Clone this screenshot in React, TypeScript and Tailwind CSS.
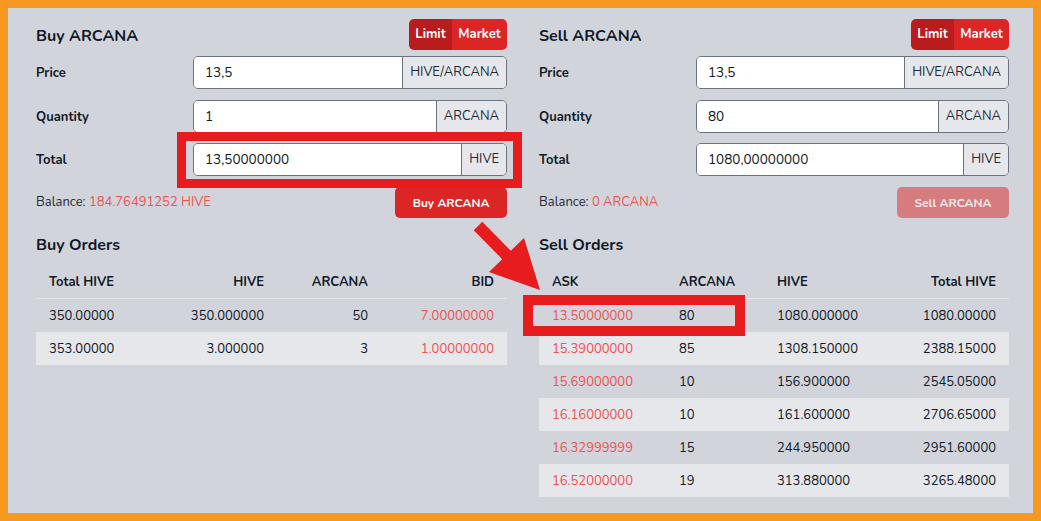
import React from "react";

const FONT = { fontFamily: '"Nunito", "Lato", "Open Sans", sans-serif' };

function Toggle() {
  return (
    <div className="flex h-[31px] rounded-[5px] overflow-hidden text-[13px] font-bold text-white">
      <div className="w-[43px] bg-[#b91c1c] flex items-center justify-center pt-[1px]">Limit</div>
      <div className="w-[55px] bg-[#dc2626] flex items-center justify-center pt-[1px]">Market</div>
    </div>
  );
}

function Field({ label, value, addon, mt }: { label: string; value: string; addon: string; mt: string }) {
  return (
    <div className={`flex items-center ${mt}`}>
      <div className="w-[157px] text-[13px] font-bold text-[#111827] pt-[2px]">{label}</div>
      <div className="flex-1 flex h-[33px] rounded-[5px] border border-[#6b7280] overflow-hidden">
        <div className="flex-1 bg-white flex items-center pl-[11px] pt-[1px] text-[13.5px] text-[#111827]">{value}</div>
        <div className="bg-[#e5e7eb] border-l border-[#6b7280] flex items-center px-[7px] pt-[1px] text-[13px] text-[#1f2937]">{addon}</div>
      </div>
    </div>
  );
}

function TradeForm({
  title,
  price,
  qty,
  total,
  balance,
  button,
  disabled,
}: {
  title: string;
  price: string;
  qty: string;
  total: string;
  balance: string;
  button: string;
  disabled?: boolean;
}) {
  return (
    <div>
      <div className="flex items-center justify-between h-[31px]">
        <div className="text-[16px] font-bold text-[#111827] pt-[2px]">{title}</div>
        <Toggle />
      </div>
      <Field label="Price" value={price} addon="HIVE/ARCANA" mt="mt-[6px]" />
      <Field label="Quantity" value={qty} addon="ARCANA" mt="mt-[11px]" />
      <Field label="Total" value={total} addon="HIVE" mt="mt-[10px]" />
      <div className="flex items-center justify-between mt-[11px]">
        <div className="text-[13px] text-[#1f2937] pt-[1px]">
          Balance: <span className="text-[#f05252]">{balance}</span>
        </div>
        <div
          className={`w-[112px] h-[31px] rounded-[5px] flex items-center justify-center text-[12px] font-bold text-white ${
            disabled ? "bg-[#dc2626] opacity-50" : "bg-[#dc2626]"
          }`}
        >
          {button}
        </div>
      </div>
    </div>
  );
}

const buyRows = [
  ["350.00000", "350.000000", "50", "7.00000000"],
  ["353.00000", "3.000000", "3", "1.00000000"],
];

const sellRows = [
  ["13.50000000", "80", "1080.000000", "1080.00000"],
  ["15.39000000", "85", "1308.150000", "2388.15000"],
  ["15.69000000", "10", "156.900000", "2545.05000"],
  ["16.16000000", "10", "161.600000", "2706.65000"],
  ["16.32999999", "15", "244.950000", "2951.60000"],
  ["16.52000000", "19", "313.880000", "3265.48000"],
];

function BuyTable() {
  const cols = "grid grid-cols-[114px_127px_104px_126px]";
  return (
    <div>
      <div className={`${cols} h-[34px] items-center pt-[2px] border-b border-[#e5e7eb] text-[13px] font-bold text-[#111827]`}>
        <div className="px-[13px]">Total HIVE</div>
        <div className="px-[13px] text-right">HIVE</div>
        <div className="px-[13px] text-right">ARCANA</div>
        <div className="px-[13px] text-right">BID</div>
      </div>
      {buyRows.map((r, i) => (
        <div
          key={i}
          className={`${cols} h-[33px] items-center pt-[2px] text-[13px] text-[#111827] ${i % 2 === 1 ? "bg-[#e5e7eb]" : ""}`}
        >
          <div className="px-[13px]">{r[0]}</div>
          <div className="px-[13px] text-right">{r[1]}</div>
          <div className="px-[13px] text-right">{r[2]}</div>
          <div className="px-[13px] text-right text-[#f05252]">{r[3]}</div>
        </div>
      ))}
    </div>
  );
}

function SellTable() {
  const cols = "grid grid-cols-[127px_98px_126px_119px]";
  return (
    <div>
      <div className={`${cols} h-[34px] items-center pt-[2px] border-b border-[#e5e7eb] text-[13px] font-bold text-[#111827]`}>
        <div className="px-[13px]">ASK</div>
        <div className="px-[13px]">ARCANA</div>
        <div className="px-[13px]">HIVE</div>
        <div className="px-[13px] text-right">Total HIVE</div>
      </div>
      {sellRows.map((r, i) => (
        <div
          key={i}
          className={`${cols} h-[33px] items-center pt-[2px] text-[13px] text-[#111827] ${i % 2 === 1 ? "bg-[#e5e7eb]" : ""}`}
        >
          <div className="px-[13px] text-[#f05252]">{r[0]}</div>
          <div className="px-[13px]">{r[1]}</div>
          <div className="px-[13px]">{r[2]}</div>
          <div className="px-[13px] text-right">{r[3]}</div>
        </div>
      ))}
    </div>
  );
}

export default function App() {
  return (
    <div className="relative w-[1041px] h-[521px] bg-[#f7991f] p-[8px]" style={FONT}>
      <div className="w-full h-full bg-[#d1d5db] pl-[28px] pr-[24px] pt-[11px]">
        <div className="grid grid-cols-[471px_470px] gap-x-[32px]">
          <div>
            <TradeForm
              title="Buy ARCANA"
              price="13,5"
              qty="1"
              total="13,50000000"
              balance="184.76491252 HIVE"
              button="Buy ARCANA"
            />
            <div className="mt-[15px] text-[16px] font-bold text-[#111827] h-[23px] flex items-center pt-[1px]">Buy Orders</div>
            <div className="mt-[9px]">
              <BuyTable />
            </div>
          </div>
          <div>
            <TradeForm
              title="Sell ARCANA"
              price="13,5"
              qty="80"
              total="1080,00000000"
              balance="0 ARCANA"
              button="Sell ARCANA"
              disabled
            />
            <div className="mt-[15px] text-[16px] font-bold text-[#111827] h-[23px] flex items-center pt-[1px]">Sell Orders</div>
            <div className="mt-[9px]">
              <SellTable />
            </div>
          </div>
        </div>
      </div>

      {/* annotation overlays */}
      <div className="absolute left-[177px] top-[132px] w-[345px] h-[56px] border-[9px] border-[#e61c1f] pointer-events-none" />
      <div className="absolute left-[523px] top-[295px] w-[222px] h-[41px] border-[10px] border-[#e61c1f] pointer-events-none" />
      <svg className="absolute left-0 top-0 pointer-events-none" width="1041" height="521" viewBox="0 0 1041 521">
        <polygon
          points="482.3,221.8 510.8,250.8 524,238 540,290 489,272 502.2,259.2 473.7,230.2"
          fill="#e61c1f"
        />
      </svg>
    </div>
  );
}
